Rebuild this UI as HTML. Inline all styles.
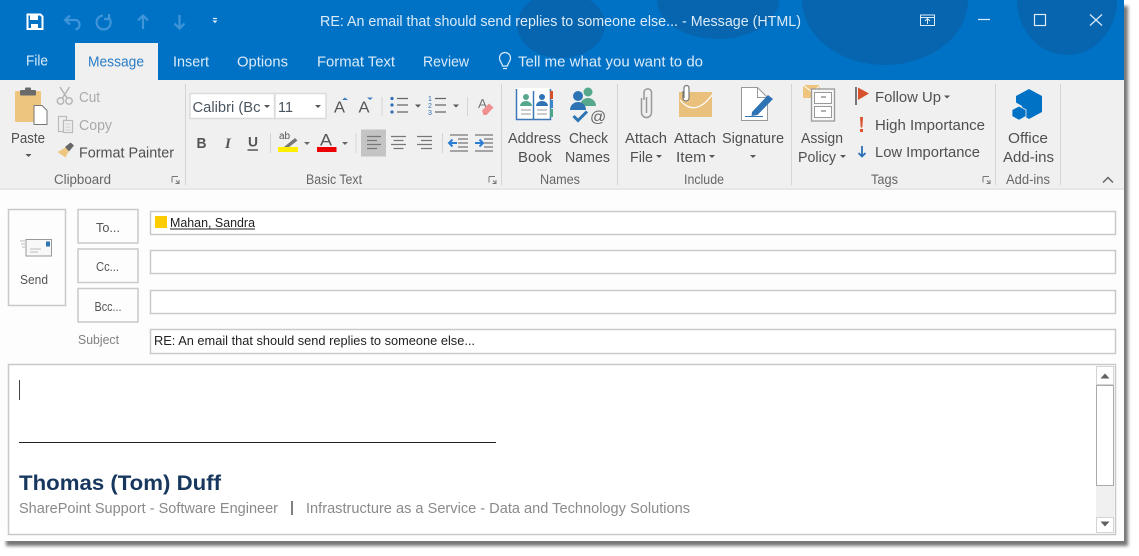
<!DOCTYPE html>
<html><head><meta charset="utf-8"><style>
html,body{margin:0;padding:0;width:1139px;height:556px;overflow:hidden;background:#fff}
svg{display:block;filter:blur(.3px)}
text{font-family:"Liberation Sans",sans-serif;font-size:15px;fill:#444;white-space:pre}
.t{fill:#dcebf8}.r{fill:#505050}.g{fill:#666;font-size:13.500px}.d{fill:#aaa}
.b{fill:#fdfdfd;stroke:#c9c9c9;stroke-width:1.500}
.f{fill:#fff;stroke:#c9c9c9;stroke-width:1.500}
.s{stroke:#d4d4d4;stroke-width:1}
</style></head><body>
<svg width="1139" height="556" viewBox="0 0 1139 556" xmlns="http://www.w3.org/2000/svg">
<defs><filter id="sh" x="-2%" y="-3%" width="104%" height="106%"><feGaussianBlur stdDeviation="1.500"/></filter>
<clipPath id="tb"><rect width="1124" height="80"/></clipPath></defs>
<rect x="6" y="6" width="1122" height="540" fill="#777" filter="url(#sh)"/>
<rect x="0" y="0" width="1124" height="541" fill="#fdfdfd"/>
<rect x="0" y="0" width="1124" height="80" fill="#0072c6"/>
<g fill="#0665ae" clip-path="url(#tb)">
<ellipse cx="561" cy="25" rx="44" ry="33"/>
<ellipse cx="718" cy="0" rx="61" ry="39"/>
<ellipse cx="885" cy="0" rx="83" ry="65"/>
<ellipse cx="1067" cy="0" rx="50" ry="55"/>
</g>
<!-- QAT -->
<path d="M27.500 14.500h13l2 2v12.500h-15z" fill="none" stroke="#fff" stroke-width="2"/><rect x="30" y="15" width="8" height="5" fill="#fff"/><rect x="31" y="24" width="7" height="5" fill="#fff"/>
<g fill="none" stroke="#3f95d8" stroke-width="2.200">
<path d="M66 20h9c3 0 4.500 2 4.500 5s-2 4-4 4.500M70 15.500l-5 4.500 5 4.500"/>
<path d="M103 15.500a7 7 0 1 0 6 2.500M109 14v5h-5"/>
<path d="M143 29V16M138 20.500l5-5 5 5"/>
<path d="M179.500 15v13M174.500 23.500l5 5 5-5"/>
</g>
<path d="M213 18.500h4" stroke="#dcebf8" stroke-width="1.200"/><path d="M212.500 20.500h5l-2.500 2.800z" fill="#dcebf8"/>
<text class="t" x="320" y="26" textLength="481" lengthAdjust="spacingAndGlyphs">RE: An email that should send replies to someone else... - Message (HTML)</text>
<!-- Window controls -->
<g fill="none" stroke="#dcebf8"><rect x="920.500" y="15" width="14" height="10.500"/><path d="M920.500 17.500h14"/><path d="M927.500 24v-5M925 21l2.500-2.500 2.500 2.500"/>
<path d="M978 19.500h12" stroke-width="1.200"/><rect x="1034.500" y="14.500" width="11" height="11" stroke-width="1.200"/><path d="M1090 14.500l12 11M1102 14.500l-12 11" stroke-width="1.200"/></g>
<!-- Tabs -->
<rect x="75" y="43" width="83" height="38" fill="#f0f0f0"/>
<text class="t" x="26" y="65.500" textLength="22" lengthAdjust="spacingAndGlyphs">File</text>
<text x="88" y="66.500" textLength="56" lengthAdjust="spacingAndGlyphs" style="fill:#2a7cc7">Message</text>
<text class="t" x="173" y="66.500" textLength="36" lengthAdjust="spacingAndGlyphs">Insert</text>
<text class="t" x="237" y="66.500" textLength="51" lengthAdjust="spacingAndGlyphs">Options</text>
<text class="t" x="317" y="66.500" textLength="78" lengthAdjust="spacingAndGlyphs">Format Text</text>
<text class="t" x="423" y="66.500" textLength="46" lengthAdjust="spacingAndGlyphs">Review</text>
<path d="M502.500 66c0-3-3-4-3-8a5.500 5.500 0 0 1 11 0c0 4-3 5-3 8zM503 68.500h4" fill="none" stroke="#dcebf8" stroke-width="1.200"/>
<text class="t" x="518" y="66.500" textLength="185" lengthAdjust="spacingAndGlyphs">Tell me what you want to do</text>
<!-- Ribbon -->
<rect x="0" y="80" width="1124" height="108" fill="#f0f0f0"/>
<rect x="0" y="188" width="1124" height="2" fill="#e6e6e6"/>
<g class="s"><path d="M185.500 84v101M501.500 84v101M617.500 84v101M791.500 84v101M995.500 84v101M1060.500 84v101"/></g>
<!-- Clipboard -->
<rect x="15" y="91" width="26" height="31" rx="1" fill="#eec57f"/><rect x="20" y="90" width="16" height="5.500" rx="1" fill="#6b6b6b"/><rect x="25" y="87.500" width="6" height="4" rx="1" fill="#6b6b6b"/>
<path d="M34 105.500h8l5 5v14h-13z" fill="#fff" stroke="#777"/>
<text class="r" x="11" y="143" textLength="34" lengthAdjust="spacingAndGlyphs">Paste</text>
<path d="M25.500 154h6l-3 3z" fill="#555"/>
<g fill="none" stroke="#b5b5b5" stroke-width="1.500"><circle cx="60.500" cy="101" r="3.200"/><circle cx="69" cy="101" r="3.200"/><path d="M62.500 98l7-11M67 98l-7-11"/></g>
<g fill="#f0f0f0" stroke="#bbb" stroke-width="1.200"><path d="M58.500 116.500h8v4h-3v11h-5z"/><path d="M63.500 120.500h9v12h-9z"/></g>
<path d="M65.500 124h5M65.500 127h5M65.500 130h5" stroke="#ccc"/>
<text class="d" x="79" y="102" textLength="21" lengthAdjust="spacingAndGlyphs">Cut</text>
<text class="d" x="79" y="130" textLength="33" lengthAdjust="spacingAndGlyphs">Copy</text>
<path d="M57.500 152l8-4.500 3 4-3 6z" fill="#eec57f"/><path d="M65 147l4 4.500 5-6-3.500-3z" fill="#666"/>
<text class="r" x="79" y="157.500" textLength="95" lengthAdjust="spacingAndGlyphs">Format Painter</text>
<text class="g" x="54" y="184" textLength="57" lengthAdjust="spacingAndGlyphs">Clipboard</text>
<path d="M172 176.500h6M172 176.500v6M176 180.500l3 3M179 180v3.500h-3.500" fill="none" stroke="#777"/>
<!-- Font -->
<rect x="190" y="93.500" width="84.500" height="25" fill="#fff" stroke="#dcdcdc" stroke-width="1.500"/><rect x="275" y="93.500" width="51" height="25" fill="#fff" stroke="#dcdcdc" stroke-width="1.500"/>
<text x="192.500" y="112" textLength="68" lengthAdjust="spacingAndGlyphs" style="fill:#4a5560">Calibri (Bc</text>
<text x="278" y="112" textLength="15" lengthAdjust="spacingAndGlyphs" style="fill:#4a5560">11</text>
<path d="M264 105h6l-3 3zM315 105h6l-3 3z" fill="#555"/>
<text x="334" y="112.500" textLength="11" lengthAdjust="spacingAndGlyphs" style="font-size:16px;fill:#555">A</text><text x="358.500" y="112.500" textLength="11" lengthAdjust="spacingAndGlyphs" style="font-size:16px;fill:#555">A</text>
<path d="M342 100h6l-3-2.500zM367 97.500h6l-3 2.500z" fill="#3a7fc1"/>
<text x="196.500" y="148" textLength="10" lengthAdjust="spacingAndGlyphs" style="font-size:15px;font-weight:bold;fill:#555">B</text>
<text x="225" y="148" style="font-size:15px;font-weight:bold;font-style:italic;fill:#555;font-family:'Liberation Serif',serif">I</text>
<text x="248" y="146.500" textLength="10" lengthAdjust="spacingAndGlyphs" style="font-size:14px;font-weight:bold;fill:#555">U</text><path d="M247.500 150h10.500" stroke="#555" stroke-width="1.500"/>
<path d="M270.500 133v20" class="s"/>
<text x="279" y="139" style="font-size:10px;fill:#555">ab</text><path d="M284 147l11-9 2.500 2.500-9 7z" fill="#777"/>
<rect x="278" y="147" width="20" height="5" fill="#ffee00"/>
<path d="M304 142h6l-3 3z" fill="#666"/>
<text x="320" y="145.500" textLength="12" lengthAdjust="spacingAndGlyphs" style="font-size:17px;fill:#555">A</text><rect x="317" y="147" width="19.500" height="5" fill="#ee0000"/>
<path d="M342 142h6l-3 3z" fill="#666"/>
<path d="M356 133v20" class="s"/>
<rect x="361" y="129.500" width="25" height="27" fill="#c4c4c4"/>
<g stroke="#777" stroke-width="1.200"><path d="M367 136.500h14M367 140.500h10M367 144.500h14M367 148.500h10"/><path d="M391 136.500h15M393.500 140.500h10M391 144.500h15M393.500 148.500h10"/><path d="M417 136.500h15M421 140.500h11M417 144.500h15M421 148.500h11"/></g>
<path d="M442.500 133v20" class="s"/>
<g stroke="#777" stroke-width="1.200"><path d="M450 135h18M458 139h10M458 143h10M458 147h10M450 151h18"/><path d="M475 135h18M475 151h18M484 139h9M484 143h9M484 147h9"/></g>
<path d="M449 143h8M452.500 139.500l-3.500 3.500 3.500 3.500" fill="none" stroke="#2b7cd3" stroke-width="2"/>
<path d="M475 143h8M479.500 139.500l3.500 3.500-3.500 3.500" fill="none" stroke="#2b7cd3" stroke-width="2"/>
<text class="g" x="306" y="184" textLength="56" lengthAdjust="spacingAndGlyphs">Basic Text</text>
<path d="M489 176.500h6M489 176.500v6M493 180.500l3 3M496 180v3.500h-3.500" fill="none" stroke="#777"/>
<!-- Lists -->
<path d="M382 97v19M467.500 97v19" class="s"/>
<g fill="#2e6fb5"><circle cx="392" cy="98.500" r="1.600"/><circle cx="392" cy="105" r="1.600"/><circle cx="392" cy="112" r="1.600"/></g>
<g style="font-size:7px"><text x="428" y="101" style="font-size:7px;fill:#2e6fb5">1</text><text x="428" y="108" style="font-size:7px;fill:#2e6fb5">2</text><text x="428" y="115" style="font-size:7px;fill:#2e6fb5">3</text></g>
<path d="M397 98.500h11M397 105h11M397 112h11M435 98.500h11M435 105h11M435 112h11" stroke="#666" stroke-width="1.200"/>
<path d="M415 104.500h6l-3 3zM453 104.500h6l-3 3z" fill="#555"/>
<text x="478" y="108" textLength="9" lengthAdjust="spacingAndGlyphs" style="font-size:13px;fill:#777">A</text>
<path d="M482 110.500l7-7 4.500 4-7 7.500h-3z" fill="#ef8f8f"/>
<!-- Names -->
<path d="M516 88h34v32h-34z" fill="#fff"/><path d="M516.500 89v30.500h34V89M533.500 91v28" fill="none" stroke="#3d78b5" stroke-width="1.500"/>
<rect x="550" y="91" width="3" height="8" fill="#d2512c"/><rect x="550" y="100" width="3" height="8" fill="#3a86c8"/><rect x="550" y="109" width="3" height="8" fill="#4ea68a"/>
<circle cx="526" cy="97" r="3" fill="#56a88c"/><path d="M520 106c0-3 3-5 6-5s6 2 6 5z" fill="#56a88c"/>
<circle cx="542" cy="97" r="3" fill="#2e74b5"/><path d="M536 106c0-3 3-5 6-5s6 2 6 5z" fill="#2e74b5"/>
<path d="M521 110h10M521 114h10M537 110h10M537 114h10" stroke="#999"/>
<circle cx="588" cy="92" r="4.500" fill="#56a88c"/><path d="M580 106c0-5 4-8 8-8s8 3 8 8z" fill="#56a88c"/>
<circle cx="578" cy="96" r="5" fill="#2e74b5"/><path d="M570 110c0-5 4-8 8-8s8 3 8 8z" fill="#2e74b5"/>
<path d="M573.500 116l4.500 4.500 9-9" fill="none" stroke="#2e74b5" stroke-width="3"/>
<text x="590" y="122" style="font-size:16px;fill:#666">@</text>
<text class="r" x="508" y="143" textLength="53" lengthAdjust="spacingAndGlyphs">Address</text>
<text class="r" x="518" y="162" textLength="34" lengthAdjust="spacingAndGlyphs">Book</text>
<text class="r" x="569" y="143" textLength="39" lengthAdjust="spacingAndGlyphs">Check</text>
<text class="r" x="565" y="162" textLength="45" lengthAdjust="spacingAndGlyphs">Names</text>
<text class="g" x="540" y="184" textLength="40" lengthAdjust="spacingAndGlyphs">Names</text>
<!-- Include -->
<path d="M644 100v-8a3.800 3.800 0 0 1 7.500 0v20.500a5 5 0 0 1-10 0V98M646.500 97v16" fill="none" stroke="#999" stroke-width="1.500"/>
<path d="M679 92h33v25h-33z" fill="#eac07d"/><path d="M680 100c9 11 20 11 32-5" fill="none" stroke="#fff" stroke-width="1.200"/>
<path d="M684 98V88a2.500 2.500 0 0 1 5 0v10a3 3 0 0 1-6 0v-7" fill="#fff" stroke="#777" stroke-width="1.200"/>
<path d="M741.500 87.500h16l10 10v23h-26z" fill="#fff" stroke="#999"/><path d="M757.500 87.500v10h10" fill="none" stroke="#999"/>
<path d="M752 112l16-17 5 4-15.500 16-6 1z" fill="#2e74b5"/><path d="M745 116.500h18" stroke="#2e74b5"/>
<text class="r" x="625" y="143" textLength="42" lengthAdjust="spacingAndGlyphs">Attach</text>
<text class="r" x="630" y="162" textLength="23" lengthAdjust="spacingAndGlyphs">File</text>
<path d="M656 155h6l-3 3z" fill="#555"/>
<text class="r" x="674" y="143" textLength="42" lengthAdjust="spacingAndGlyphs">Attach</text>
<text class="r" x="676" y="162" textLength="30" lengthAdjust="spacingAndGlyphs">Item</text>
<path d="M709 155h6l-3 3z" fill="#555"/>
<text class="r" x="722" y="143" textLength="62" lengthAdjust="spacingAndGlyphs">Signature</text>
<path d="M750 155h6l-3 3z" fill="#555"/>
<text class="g" x="684" y="184" textLength="40" lengthAdjust="spacingAndGlyphs">Include</text>
<!-- Tags -->
<path d="M803 85h17v13h-17z" fill="#eec57f"/><path d="M803 85l9 7 9-7" fill="none" stroke="#fff"/>
<rect x="811.500" y="89" width="23" height="32" fill="#f7f7f7" stroke="#999" stroke-width="1.300"/><rect x="814.500" y="92.500" width="17" height="11" fill="#fff" stroke="#999"/><rect x="814.500" y="106.500" width="17" height="11" fill="#fff" stroke="#999"/>
<path d="M821 97h5M821 111h5" stroke="#666"/>
<text class="r" x="801" y="143" textLength="42" lengthAdjust="spacingAndGlyphs">Assign</text>
<text class="r" x="798" y="162" textLength="38" lengthAdjust="spacingAndGlyphs">Policy</text>
<path d="M840 155h6l-3 3z" fill="#555"/>
<rect x="855" y="87" width="2" height="18" fill="#777"/><path d="M858 87.500l11 6-11 6.500z" fill="#d9512c"/>
<text class="r" x="875" y="102" textLength="66" lengthAdjust="spacingAndGlyphs">Follow Up</text>
<path d="M944 95.500h6l-3 3z" fill="#555"/>
<path d="M860 117h3l-.7 10.500h-1.600zM860 129h3v3h-3z" fill="#d9512c"/>
<text class="r" x="875" y="130" textLength="110" lengthAdjust="spacingAndGlyphs">High Importance</text>
<path d="M862 146v10.500M858.500 153l3.500 3.500 3.500-3.500" fill="none" stroke="#2b6fb8" stroke-width="1.800"/>
<text class="r" x="875" y="157" textLength="105" lengthAdjust="spacingAndGlyphs">Low Importance</text>
<text class="g" x="871" y="184" textLength="27" lengthAdjust="spacingAndGlyphs">Tags</text>
<path d="M983 176.500h6M983 176.500v6M987 180.500l3 3M990 180v3.500h-3.500" fill="none" stroke="#777"/>
<!-- Addins -->
<path d="M1029 89l13 7v16l-13 7-7-4v-9l-6-3.500V96z" fill="#0072c6"/>
<path d="M1019 106l7 3.800v6.600l-7 3.800-7-3.800v-6.600z" fill="#0072c6" stroke="#f0f0f0" stroke-width=".8"/>
<text class="r" x="1008" y="143" textLength="40" lengthAdjust="spacingAndGlyphs">Office</text>
<text class="r" x="1003" y="162" textLength="51" lengthAdjust="spacingAndGlyphs">Add-ins</text>
<text class="g" x="1006" y="184" textLength="44" lengthAdjust="spacingAndGlyphs">Add-ins</text>
<path d="M1103 182.500l5-5 5 5" fill="none" stroke="#666" stroke-width="1.500"/>
<!-- Compose -->
<rect class="b" x="8.500" y="209.500" width="57" height="96"/>
<path d="M26 239.500h25.500v16.500h-25.500z" fill="#f8f8f8" stroke="#999"/><rect x="46" y="241.500" width="4" height="5" fill="#2e74b5"/>
<path d="M30 249h11M30 252h8M20 241h5M21 244h4M22 247h3" stroke="#bbb"/>
<text x="20" y="284" textLength="28" lengthAdjust="spacingAndGlyphs" style="font-size:13px;fill:#555">Send</text>
<rect class="b" x="78" y="209.500" width="60" height="33.500"/>
<rect class="b" x="78" y="249" width="60" height="33.500"/>
<rect class="b" x="78" y="288.500" width="60" height="33.500"/>
<text x="96" y="232" textLength="24" lengthAdjust="spacingAndGlyphs" style="font-size:13px;fill:#555">To...</text>
<text x="96" y="271" textLength="23" lengthAdjust="spacingAndGlyphs" style="font-size:13px;fill:#555">Cc...</text>
<text x="94.500" y="311" textLength="27" lengthAdjust="spacingAndGlyphs" style="font-size:13px;fill:#555">Bcc...</text>
<text x="78" y="344" textLength="41" lengthAdjust="spacingAndGlyphs" style="font-size:13px;fill:#808080">Subject</text>
<rect class="f" x="150.500" y="211.500" width="965" height="23"/>
<rect class="f" x="150.500" y="250.500" width="965" height="23"/>
<rect class="f" x="150.500" y="290.500" width="965" height="23"/>
<rect class="f" x="150.500" y="329.500" width="965" height="24"/>
<rect x="155" y="216" width="12" height="12" fill="#ffcc00"/>
<text x="170" y="227" textLength="85" lengthAdjust="spacingAndGlyphs" style="font-size:13px;fill:#222">Mahan, Sandra</text>
<path d="M170 229h85" stroke="#222"/>
<text x="154" y="345" textLength="321" lengthAdjust="spacingAndGlyphs" style="font-size:13px;fill:#222">RE: An email that should send replies to someone else...</text>
<rect class="f" x="8.500" y="364.500" width="1107" height="170"/>
<path d="M19.500 380v20" stroke="#444"/>
<path d="M19 442.500h477" stroke="#222"/>
<text x="19" y="490" textLength="202" lengthAdjust="spacingAndGlyphs" style="font-size:21.500px;font-weight:bold;fill:#17375e">Thomas (Tom) Duff</text>
<text x="19" y="513" textLength="259" lengthAdjust="spacingAndGlyphs" style="fill:#8a8a8a">SharePoint Support - Software Engineer</text>
<rect x="291" y="501" width="2" height="14" fill="#808080"/>
<text x="306" y="513" textLength="384" lengthAdjust="spacingAndGlyphs" style="fill:#8a8a8a">Infrastructure as a Service - Data and Technology Solutions</text>
<!-- Scrollbar -->
<rect x="1096" y="366" width="18" height="167" fill="#f0f0f0"/>
<rect x="1096.500" y="366.500" width="17" height="18" fill="#fff" stroke="#d4d4d4"/>
<rect x="1096.500" y="385.500" width="17" height="100" fill="#fff" stroke="#aaa"/>
<rect x="1096.500" y="517.500" width="17" height="15" fill="#fff" stroke="#d4d4d4"/>
<path d="M1100.500 378.500l4.500-5 4.500 5zM1100.500 521.500l4.500 5 4.500-5z" fill="#606060"/>
</svg>
</body></html>
